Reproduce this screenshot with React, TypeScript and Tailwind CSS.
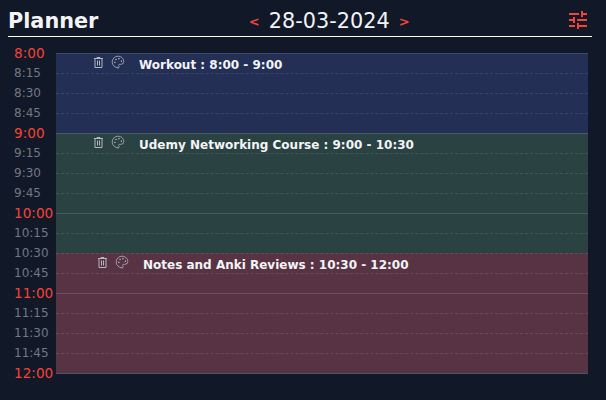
import { MdTune } from "react-icons/md";
import { Palette } from "lucide-react";

const times = [
  "8:00", "8:15", "8:30", "8:45",
  "9:00", "9:15", "9:30", "9:45",
  "10:00", "10:15", "10:30", "10:45",
  "11:00", "11:15", "11:30", "11:45",
  "12:00",
];

const events = [
  { title: "Workout : 8:00 - 9:00", rows: 4, bg: "bg-[#2b3969]/70", indent: "pl-[38px]" },
  { title: "Udemy Networking Course : 9:00 - 10:30", rows: 6, bg: "bg-[#35544e]/70", indent: "pl-[38px]" },
  { title: "Notes and Anki Reviews : 10:30 - 12:00", rows: 6, bg: "bg-[#753f50]/70", indent: "pl-[42px]" },
];

function TrashIcon() {
  return (
    <svg width="9" height="11" viewBox="0 0 9 11" fill="none" stroke="currentColor" strokeWidth="1">
      <path d="M0 1.5h9M3 1.5V.5h3v1M1 1.5v9h7v-9M3.5 3.5v5M5.5 3.5v5" />
    </svg>
  );
}

function EventBlock({ title, rows, bg, indent }: (typeof events)[number]) {
  return (
    <div className={`${bg} ${indent} flex items-start`} style={{ height: rows * 20 }}>
      <button className="mt-[4px] text-[#b4b8bf]">
        <TrashIcon />
      </button>
      <button className="ml-[8px] mt-[2px] text-[#b4b8bf]">
        <Palette size={14} strokeWidth={1.3} />
      </button>
      <span className="pl-[14px] pt-[3px] text-[12px] leading-[18px] font-bold text-[#f3f4f6]">{title}</span>
    </div>
  );
}

export default function App() {
  return (
    <div className="h-[400px] w-[606px] overflow-hidden bg-[#111827] font-['DejaVu_Sans',sans-serif]">
      <header className="ml-2 flex h-[37px] w-[584px] items-center justify-between border-b border-white pt-[7px]">
        <h1 className="text-[20.8px] font-bold text-[#f3f4f6]">Planner</h1>
        <div className="mr-[6px] flex items-center gap-[9px]">
          <span className="text-[13px] font-bold text-[#f44336]">&lt;</span>
          <span className="text-[20.8px] text-[#f3f4f6]">28-03-2024</span>
          <span className="text-[13px] font-bold text-[#f44336]">&gt;</span>
        </div>
        <MdTune size={24} className="mb-[3px] mr-[2px] text-[#f44336]" />
      </header>

      <div className="flex pl-[14px] pt-[6px]">
        <div className="w-[42px] shrink-0">
          {times.map((t) => (
            <div
              key={t}
              className={t.endsWith(":00") ? "h-5 text-[13.6px] leading-5 text-[#f44336]" : "h-5 text-[12px] leading-5 text-[#737884]"}
            >
              {t}
            </div>
          ))}
        </div>
        <div className="relative mt-[10px] h-[321px] w-[532px] border-b border-[#4b5563]">
          {times.slice(0, 16).map((t) => (
            <div
              key={t}
              className={t.endsWith(":00") ? "h-5 border-t border-[#6b7280]" : "h-5 border-t border-dashed border-[#596070]"}
            />
          ))}
          <div className="absolute inset-x-0 top-0">
            {events.map((e) => (
              <EventBlock key={e.title} {...e} />
            ))}
          </div>
        </div>
      </div>
    </div>
  );
}
